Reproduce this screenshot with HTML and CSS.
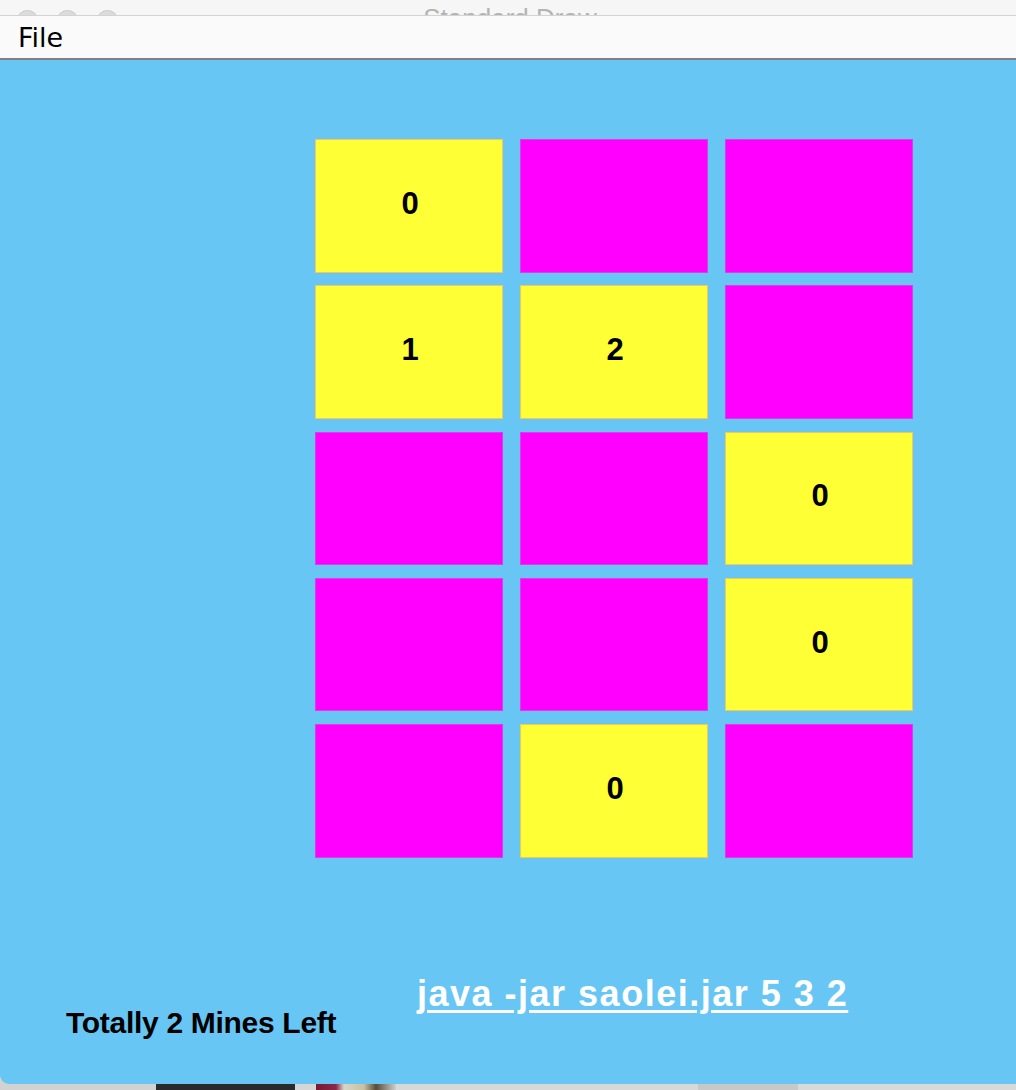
FILE: index.html
```html
<!DOCTYPE html>
<html>
<head>
<meta charset="utf-8">
<title>Standard Draw</title>
<link rel="stylesheet" href="styles.css">
</head>
<body>
<div class="window">
  <div class="titlebar">
    <div class="lights"><span class="light"></span><span class="light"></span><span class="light"></span></div>
    <div class="title">Standard Draw</div>
  </div>
  <div class="menubar"><span class="menu-item">File</span></div>
  <div class="canvas">
    <div class="board">
      <div class="cell open">0</div>
      <div class="cell hidden"></div>
      <div class="cell hidden"></div>
      <div class="cell open">1</div>
      <div class="cell open">2</div>
      <div class="cell hidden"></div>
      <div class="cell hidden"></div>
      <div class="cell hidden"></div>
      <div class="cell open">0</div>
      <div class="cell hidden"></div>
      <div class="cell hidden"></div>
      <div class="cell open">0</div>
      <div class="cell hidden"></div>
      <div class="cell open">0</div>
      <div class="cell hidden"></div>
    </div>
    <div class="footer">
      <span class="status">Totally 2 Mines Left</span>
      <span class="cmd">java -jar saolei.jar 5 3 2</span>
    </div>
  </div>
</div>
<div class="desktop">
  <span class="seg s1"></span>
  <span class="seg s2"></span>
  <span class="seg s3"></span>
  <span class="seg s4"></span>
  <span class="seg s5"></span>
  <span class="seg s6"></span>
  <span class="seg s7"></span>
</div>
</body>
</html>
```

FILE: styles.css
```css
html, body {
  margin: 0;
  padding: 0;
}
body {
  width: 1016px;
  height: 1090px;
  overflow: hidden;
  background: #d4d4d4;
  font-family: "Liberation Sans", Arial, sans-serif;
}
.window {
  display: flex;
  flex-direction: column;
  width: 1016px;
}
.titlebar {
  display: grid;
  height: 15px;
  overflow: hidden;
  background: #f6f6f6;
  border-bottom: 1px solid #d3d3d3;
}
.lights {
  grid-area: 1 / 1;
  display: flex;
  gap: 19px;
  align-items: flex-end;
  padding-left: 17px;
  margin-bottom: 10px;
}
.light {
  width: 21px;
  height: 21px;
  flex: none;
  border-radius: 50%;
  background: #dcdcdc;
  box-shadow: inset 0 0 0 1px #d0d0d0;
}
.title {
  grid-area: 1 / 1;
  align-self: end;
  text-align: center;
  padding-left: 4px;
  font-family: "Liberation Sans", Arial, sans-serif;
  font-size: 26px;
  line-height: 26px;
  color: #b3b3b3;
  margin-bottom: 15px;
  transform: translateY(5px);
}
.menubar {
  height: 42px;
  background: #fafafa;
  border-bottom: 2px solid #808080;
  display: flex;
  align-items: center;
  padding-left: 18px;
}
.menu-item {
  font-family: "DejaVu Sans", "Lucida Grande", sans-serif;
  font-size: 27px;
  color: #000;
  line-height: 42px;
  padding-top: 2px;
}
.canvas {
  height: 1024px;
  background: #67c6f4;
  border-bottom-left-radius: 9px;
  box-sizing: border-box;
  padding-top: 79px;
  display: flex;
  flex-direction: column;
}
.board {
  align-self: flex-start;
  margin-left: 315px;
  display: grid;
  grid-template-columns: repeat(3, 188px);
  grid-template-rows: repeat(5, 133.5px);
  column-gap: 17px;
  row-gap: 12.75px;
}
.cell {
  display: flex;
  align-items: center;
  justify-content: center;
  font-weight: bold;
  font-size: 31px;
  color: #000;
  padding-bottom: 4px;
  padding-left: 2px;
  box-sizing: border-box;
}
.cell.open {
  background: #ffff35;
  box-shadow: inset 0 0 0 1px #f2c85a;
}
.cell.hidden {
  background: #ff00ff;
  box-shadow: inset 0 0 0 1px #dc3cee;
}
.footer {
  margin-top: 118px;
  display: grid;
  grid-template-columns: 417px auto;
  align-items: start;
}
.status {
  padding-left: 66px;
  margin-top: 32px;
  font-weight: bold;
  font-size: 30px;
  line-height: 30px;
  letter-spacing: -0.3px;
  color: #000;
  white-space: nowrap;
}
.cmd {
  font-weight: bold;
  font-size: 36px;
  line-height: 36px;
  letter-spacing: 1.5px;
  color: #fff;
  text-decoration: underline;
  text-decoration-thickness: 3px;
  text-underline-offset: 4px;
  white-space: nowrap;
}
.desktop {
  display: flex;
  height: 6px;
}
.seg {
  display: block;
  height: 100%;
}
.s1 { width: 156px; background: #d2d2d2; }
.s2 { width: 139px; background: #2a2a2c; }
.s3 { width: 21px; background: #d6d6d6; }
.s4 { width: 80px; background: linear-gradient(90deg, #7a1830 0, #8c2848 25%, #d8d6c8 35%, #c8c0a0 60%, #5a4a38 75%, #cfcfcf 100%); }
.s5 { width: 302px; background: #d8d8d8; }
.s6 { width: 100px; background: #c8c8c8; }
.s7 { flex: 1; background: #d9d9d9; }
```
